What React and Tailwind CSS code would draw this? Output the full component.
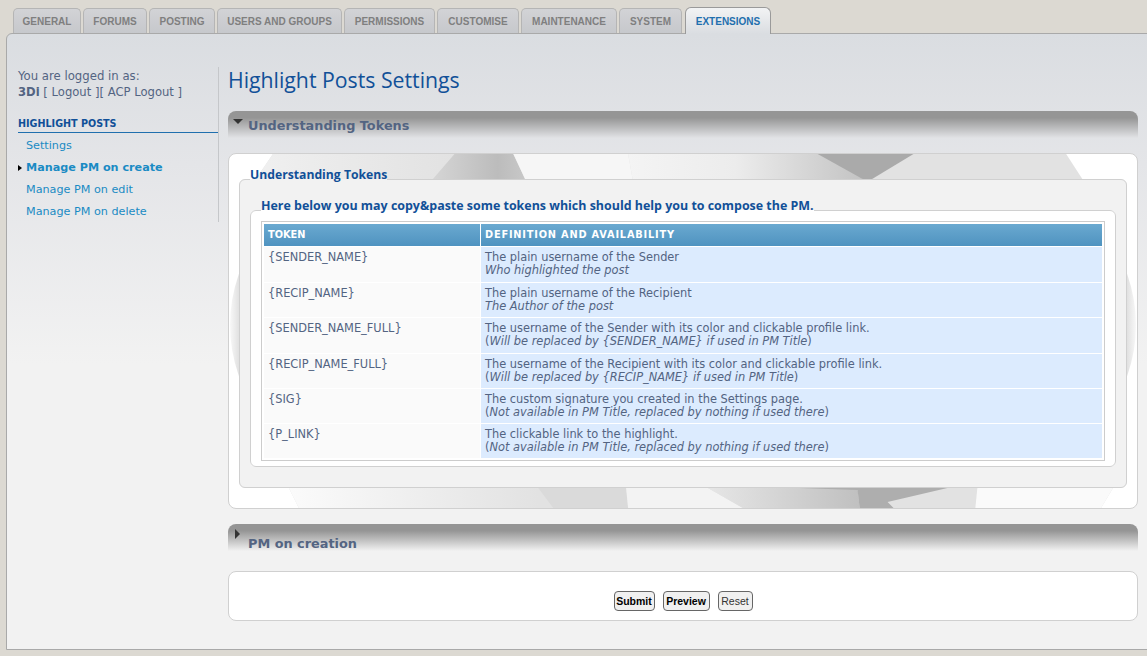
const tabs = [
  { label: 'GENERAL', w: 'w-[68px]' },
  { label: 'FORUMS', w: 'w-[64px]' },
  { label: 'POSTING', w: 'w-[66px]' },
  { label: 'USERS AND GROUPS', w: 'w-[125px]' },
  { label: 'PERMISSIONS', w: 'w-[91px]' },
  { label: 'CUSTOMISE', w: 'w-[82px]' },
  { label: 'MAINTENANCE', w: 'w-[96px]' },
  { label: 'SYSTEM', w: 'w-[63px]' },
];

const rows = [
  { token: '{SENDER_NAME}', h: 'h-[36px]', line: 'The plain username of the Sender', note: <i>Who highlighted the post</i> },
  { token: '{RECIP_NAME}', h: 'h-[35px]', line: 'The plain username of the Recipient', note: <i>The Author of the post</i> },
  { token: '{SENDER_NAME_FULL}', h: 'h-[36px]', line: 'The username of the Sender with its color and clickable profile link.', note: <>(<i>Will be replaced by {'{SENDER_NAME}'} if used in PM Title</i>)</> },
  { token: '{RECIP_NAME_FULL}', h: 'h-[35px]', line: 'The username of the Recipient with its color and clickable profile link.', note: <>(<i>Will be replaced by {'{RECIP_NAME}'} if used in PM Title</i>)</> },
  { token: '{SIG}', h: 'h-[35px]', line: 'The custom signature you created in the Settings page.', note: <>(<i>Not available in PM Title, replaced by nothing if used there</i>)</> },
  { token: '{P_LINK}', h: 'h-[35px]', line: 'The clickable link to the highlight.', note: <>(<i>Not available in PM Title, replaced by nothing if used there</i>)</> },
];

// backdrop picture of the settings panel, only its edges show round the fieldset
const Sphere = () => (
  <svg className="absolute left-0 top-0 w-full h-full" viewBox="0 0 910 356" preserveAspectRatio="none">
    <defs>
      <linearGradient id="side" x1="0" x2="1" y1="0" y2="0">
        <stop offset="0" stopColor="#f8f8f8" />
        <stop offset="0.012" stopColor="#dcdcdc" />
        <stop offset="0.988" stopColor="#dcdcdc" />
        <stop offset="1" stopColor="#f8f8f8" />
      </linearGradient>
      <linearGradient id="topLeft" x1="0" x2="1" y1="0" y2="0">
        <stop offset="0" stopColor="#f0f0f0" />
        <stop offset="1" stopColor="#e2e2e2" />
      </linearGradient>
      <linearGradient id="topDark" x1="0" x2="1" y1="0" y2="0">
        <stop offset="0" stopColor="#d6d6d6" />
        <stop offset="0.7" stopColor="#bcbcbc" />
        <stop offset="1" stopColor="#c8c8c8" />
      </linearGradient>
      <linearGradient id="topMid" x1="0" x2="1" y1="0" y2="0">
        <stop offset="0" stopColor="#f4f4f4" />
        <stop offset="0.45" stopColor="#ececec" />
        <stop offset="1" stopColor="#c2c2c2" />
      </linearGradient>
      <linearGradient id="botLeft" x1="0" x2="1" y1="0" y2="0">
        <stop offset="0" stopColor="#fbfbfb" />
        <stop offset="1" stopColor="#e2e2e2" />
      </linearGradient>
      <linearGradient id="botMid" x1="0" x2="1" y1="0" y2="0">
        <stop offset="0" stopColor="#e6e6e6" />
        <stop offset="1" stopColor="#c0c0c0" />
      </linearGradient>
    </defs>
    <ellipse cx="455" cy="172" rx="454" ry="260" fill="url(#side)" />
    <polygon points="44,0 839,0 857,28 25,28" fill="#e2e2e2" />
    <polygon points="60,336 886,336 874,356 70,356" fill="#e2e2e2" />
    <polygon points="44,0 226,0 202,28 25,28" fill="url(#topLeft)" />
    <polygon points="226,0 285,0 298,28 202,28" fill="url(#topDark)" />
    <polygon points="285,0 400,0 405,28 298,28" fill="#f6f6f6" />
    <polygon points="400,0 600,0 640,28 405,28" fill="url(#topMid)" />
    <polygon points="590,0 686,0 640,28" fill="#aaaaaa" />
    <polygon points="60,336 310,336 310,356 70,356" fill="url(#botLeft)" />
    <polygon points="310,336 398,336 400,356 325,356" fill="#dadada" />
    <polygon points="398,336 480,336 515,356 400,356" fill="#f3f3f3" />
    <polygon points="480,336 630,336 632,356 515,356" fill="url(#botMid)" />
    <polygon points="572,336 720,336 660,350 666,356 632,356 630,338" fill="#aeaeae" />
    <polygon points="750,336 886,336 874,356 748,356" fill="#fafafa" />
  </svg>
);

export default function App() {
  return (
    <div className="w-[1147px] h-[656px] overflow-hidden bg-[#dcd9d2] pt-[7px] pl-[6px] font-['DejaVu_Sans',sans-serif] text-[11.4px] text-[#536482]">
      <div className="flex items-end gap-[2px] pl-[7px] h-[26px] relative z-10 font-['Liberation_Sans',sans-serif] font-bold text-[10px]">
        {tabs.map((tab) => (
          <div key={tab.label} className={`${tab.w} h-[25px] bg-gradient-to-b from-[#d2d3d6] to-[#c6c8cc] border border-b-0 border-[#b5b5b5] rounded-t-[5px] flex items-center justify-center text-[#7f7f7f] shrink-0`}>
            {tab.label}
          </div>
        ))}
        <div className="w-[86px] h-[27px] -mb-px ml-[1px] bg-gradient-to-b from-[#f2f3f4] to-[#dadde1] border border-b-0 border-[#9a9a9a] rounded-t-[6px] flex items-center justify-center text-[#1f6fae] shrink-0">
          EXTENSIONS
        </div>
      </div>
      <div className="w-[1150px] h-[617px] bg-[linear-gradient(to_bottom,#dadde1_0,#e4e5e8_130px,#f2f2f2_330px)] border border-[#a9a9a9] rounded-tl-[6px] flex pl-[11px] pt-[33px]">
        <div className="w-[201px] h-[155px] border-r border-[#c5c7ca] shrink-0 text-[11.2px]">
          <div className="leading-[16px] pt-[1px] text-[11.7px]">You are logged in as:</div>
          <div className="leading-[16px] text-[11.6px]"><b>3Di</b> [ Logout ][ ACP Logout ]</div>
          <div className="mt-[16px] h-[17px] pt-[1px] border-b border-[#1f6fae] font-bold text-[9.6px] leading-[14px] text-[#115098]">HIGHLIGHT POSTS</div>
          <ul className="text-[#1a8bc4] leading-[22px] pt-[2px]">
            <li className="pl-[8px]">Settings</li>
            <li className="pl-[8px] font-bold relative">
              <span className="absolute left-0 top-[8px] w-0 h-0 border-y-[3px] border-y-transparent border-l-[4px] border-l-black" />
              Manage PM on create
            </li>
            <li className="pl-[8px]">Manage PM on edit</li>
            <li className="pl-[8px]">Manage PM on delete</li>
          </ul>
        </div>
        <div className="w-[910px] ml-[9px] shrink-0">
          <h1 className="-mt-[1px] font-['Open_Sans',sans-serif] text-[21.25px] leading-[28px] text-[#115098]">Highlight Posts Settings</h1>
          <div className="mt-[17px] h-[27px] rounded-t-[8px] bg-[linear-gradient(to_bottom,#959595_0,#959595_25%,#e2e3e6_100%)] relative pl-[20px] pt-[7px] font-bold text-[12.85px] leading-[16px] text-[#536482]">
            <span className="absolute left-[5px] top-[8px] w-0 h-0 border-x-[5px] border-x-transparent border-t-[5px] border-t-[#333]" />
            Understanding Tokens
          </div>
          <div className="mt-[15px] h-[356px] bg-white border border-[#d0d0d0] rounded-[8px] relative overflow-hidden">
            <Sphere />
            <fieldset className="absolute left-[10px] top-[13px] w-[888px] h-[321px] bg-[#f2f2f2] border border-[#d0d0d0] rounded-[6px] pl-[10px]">
              <legend className="font-['Open_Sans',sans-serif] font-bold text-[12.2px] leading-[13px] pt-[1px] pb-[11px] text-[#115098]">Understanding Tokens</legend>
              <fieldset className="mt-[7px] w-[866px] h-[268px] bg-white border border-[#d0d0d0] rounded-[6px] pl-[10px]">
                <legend className="font-['Open_Sans',sans-serif] font-bold text-[12.45px] leading-[13px] pb-[10px] text-[#115098]">Here below you may copy&amp;paste some tokens which should help you to compose the PM.</legend>
                <table className="-mt-px w-[844px] h-[240px] border border-[#cccccc] border-separate border-spacing-0 p-[2px] table-fixed">
                  <thead>
                    <tr className="h-[22px]">
                      <th className="w-[217px] px-[4px] text-left text-[9.8px] text-white bg-gradient-to-b from-[#6aa9d0] to-[#4f93c0] border-r border-white">TOKEN</th>
                      <th className="px-[4px] text-left text-[9.8px] tracking-[0.8px] text-white bg-gradient-to-b from-[#6aa9d0] to-[#4f93c0]">DEFINITION AND AVAILABILITY</th>
                    </tr>
                  </thead>
                  <tbody>
                    {rows.map((row) => (
                      <tr key={row.token} className={row.h}>
                        <td className="align-top px-[4px] pt-[4px] bg-[#fafafa] border-t border-white border-r leading-[13px]">{row.token}</td>
                        <td className="align-top px-[4px] pt-[4px] bg-[#dcebfe] border-t border-white leading-[13px]">
                          <div>{row.line}</div>
                          <div>{row.note}</div>
                        </td>
                      </tr>
                    ))}
                  </tbody>
                </table>
              </fieldset>
            </fieldset>
          </div>
          <div className="mt-[15px] h-[27px] rounded-t-[8px] bg-[linear-gradient(to_bottom,#959595_0,#959595_25%,#f2f2f2_100%)] relative pl-[20px] pt-[12px] font-bold text-[12.85px] leading-[16px] text-[#536482]">
            <span className="absolute left-[7px] top-[5px] w-0 h-0 border-y-[5px] border-y-transparent border-l-[5px] border-l-[#333]" />
            PM on creation
          </div>
          <div className="mt-[20px] h-[50px] bg-white border border-[#d0d0d0] rounded-[8px] flex items-end justify-center gap-[8px] pb-[9px] font-['Liberation_Sans',sans-serif] text-[10.5px] text-black">
            <button className="h-[20px] w-[41px] pt-px bg-[#f0f0f0] border border-[#666] rounded-[4px] font-bold">Submit</button>
            <button className="h-[20px] w-[47px] pt-px bg-[#f0f0f0] border border-[#666] rounded-[4px] font-bold">Preview</button>
            <button className="h-[20px] w-[35px] pt-px bg-[#f0f0f0] border border-[#666] rounded-[4px] text-[#333]">Reset</button>
          </div>
        </div>
      </div>
    </div>
  );
}
